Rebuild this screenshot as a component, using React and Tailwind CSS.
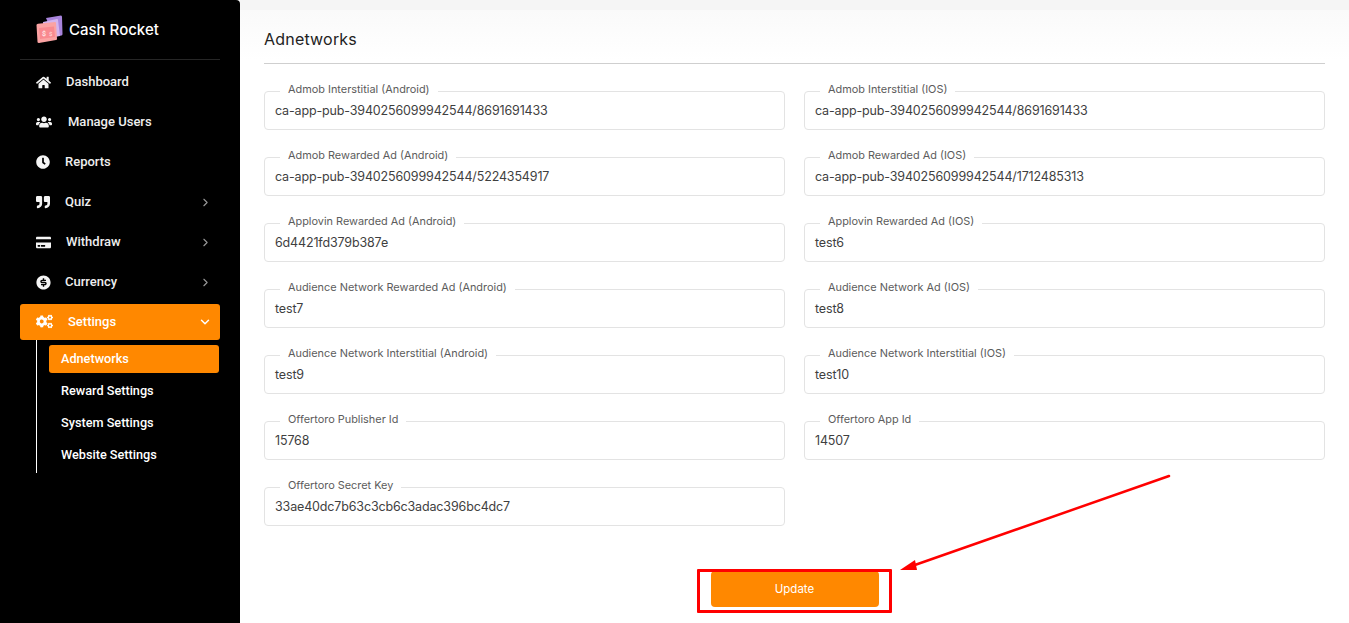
import React from "react";
import { FaHome, FaUsers, FaClock, FaQuoteRight, FaCreditCard, FaCogs } from "react-icons/fa";
import { RiMoneyDollarCircleFill } from "react-icons/ri";
import { ChevronRight, ChevronDown } from "lucide-react";

const menu = [
  { label: "Dashboard", Icon: FaHome, size: 15, gap: "ml-[12px]" },
  { label: "Manage Users", Icon: FaUsers, size: 16, gap: "ml-[14px]" },
  { label: "Reports", Icon: FaClock, size: 14, gap: "ml-[11px]" },
  { label: "Quiz", Icon: FaQuoteRight, size: 14, gap: "ml-[11px]", arrow: true },
  { label: "Withdraw", Icon: FaCreditCard, size: 15, gap: "ml-[12px]", arrow: true },
  { label: "Currency", Icon: RiMoneyDollarCircleFill, size: 17, gap: "ml-[11px]", arrow: true, shift: "-ml-[1px]" },
];

const fields = [
  ["Admob Interstitial (Android)", "ca-app-pub-3940256099942544/8691691433"],
  ["Admob Interstitial (IOS)", "ca-app-pub-3940256099942544/8691691433"],
  ["Admob Rewarded Ad (Android)", "ca-app-pub-3940256099942544/5224354917"],
  ["Admob Rewarded Ad (IOS)", "ca-app-pub-3940256099942544/1712485313"],
  ["Applovin Rewarded Ad (Android)", "6d4421fd379b387e"],
  ["Applovin Rewarded Ad (IOS)", "test6"],
  ["Audience Network Rewarded Ad (Android)", "test7"],
  ["Audience Network Ad (IOS)", "test8"],
  ["Audience Network Interstitial (Android)", "test9"],
  ["Audience Network Interstitial (IOS)", "test10"],
  ["Offertoro Publisher Id", "15768"],
  ["Offertoro App Id", "14507"],
  ["Offertoro Secret Key", "33ae40dc7b63c3cb6c3adac396bc4dc7"],
];

function Logo() {
  return (
    <svg width="27" height="29" viewBox="0 0 27 29" className="shrink-0">
      <path d="M10 3 L25 0.5 Q26 0.5 26 2 L26.5 19 Q26.5 20 25.5 20.5 L18 22 Z" fill="#a884dc" />
      <path d="M7 7 L21 4 Q22 4 22 5 L24 21 L8 23 Z" fill="#d3b4ee" />
      <path d="M0.5 10 Q0.5 9 2 8.8 L19 7 Q20 7 20 8 L21 24 Q21 25 20 25 L3 28 Q1.5 28 1.5 27 Z" fill="#fba3a3" />
      <path d="M3 13 L18 11.5 L19 22 L4 24 Z" fill="#f98a90" />
      <text x="6" y="21" fontSize="7" fontWeight="700" fill="#ffe6e6" fontFamily="Roboto, sans-serif">$</text>
      <text x="13" y="20.5" fontSize="6" fontWeight="700" fill="#ffd0d0" fontFamily="Roboto, sans-serif">$</text>
    </svg>
  );
}

function Field({ label, value }) {
  return (
    <fieldset className="block min-w-0 h-[46px] rounded-[4px] border border-[#e3e3e3] pl-[10px] m-0">
      <legend className="ml-[5px] px-[8px] text-[10.9px] leading-[14px] text-[#5c5c5c] -translate-y-[2px]">{label}</legend>
      <div className="text-[12.5px] leading-[20px] mt-[3px] text-[#3f3f3f] tracking-[-0.15px]">{value}</div>
    </fieldset>
  );
}

export default function App() {
  return (
    <div className="relative flex h-[623px] w-full overflow-hidden bg-white font-['Inter',sans-serif]">
      <aside className="w-[240px] shrink-0 bg-black px-[20px] rounded-tr-[4px] font-['Roboto',sans-serif]">
        <div className="flex h-[60px] items-center gap-[6px] border-b border-[#262626] pl-[16px]">
          <Logo />
          <span className="pt-[2px] text-[15px] font-medium text-white font-['Inter',sans-serif]">Cash Rocket</span>
        </div>
        <nav className="mt-[1px]">
          {menu.map(({ label, Icon, size, gap, arrow, shift }) => (
            <div key={label} className="flex h-[40px] pt-[2px] items-center text-[13px] font-medium text-[#eeeeee]">
              <span className="flex w-[18px] ml-[16px] justify-start"><Icon size={size} color="#f5f5f5" className={shift} /></span>
              <span className={gap}>{label}</span>
              {arrow && <ChevronRight size={13} strokeWidth={2} color="#999999" className="ml-auto mr-[8px]" />}
            </div>
          ))}
          <div className="flex h-[36px] mt-[3px] pb-[1px] items-center rounded-[3px] bg-[#ff8800] text-[13px] font-medium text-white">
            <span className="flex w-[18px] ml-[16px]"><FaCogs size={17} color="#fff" /></span>
            <span className="ml-[14px]">Settings</span>
            <ChevronDown size={14} strokeWidth={2.5} color="#fff" className="ml-auto mr-[8px]" />
          </div>
          <div className="ml-[16px] border-l border-white pl-[12px] pt-[5px] pb-[2px] w-[183px] h-[133px]">
            {["Adnetworks", "Reward Settings", "System Settings", "Website Settings"].map((s, i) => (
              <div key={s} className={`flex h-[28px] mb-[4px] items-center rounded-[3px] pl-[12px] text-[12.7px] font-medium text-white ${i === 0 ? "bg-[#ff8800]" : ""}`}>{s}</div>
            ))}
          </div>
        </nav>
      </aside>
      <main className="flex-1 min-w-0">
        <div className="h-[10px] bg-[#f5f5f5]" />
        <div className="px-[24px] bg-gradient-to-b from-[#fafafa] to-white to-[50px]">
          <h1 className="flex h-[54px] items-center border-b border-[#cfcfcf] pt-[5px] text-[16px] font-normal tracking-[0.2px] text-[#222]">Adnetworks</h1>
          <div className="mt-[20px] grid grid-cols-2 gap-x-[19px] gap-y-[20px]">
            {fields.map(([l, v]) => <Field key={l} label={l} value={v} />)}
          </div>
          <div className="mt-[45px] flex justify-center">
            <button className="h-[36px] w-[168px] pt-[2px] rounded-[4px] bg-[#ff8800] text-[11.5px] font-normal text-white">Update</button>
          </div>
        </div>
      </main>
      <div className="absolute left-[697px] top-[569px] h-[44px] w-[195px] border-[3px] border-[#ff0000] rounded-[1px]" />
      <svg className="absolute left-0 top-0 pointer-events-none" width="1349" height="623">
        <line x1="1169" y1="476" x2="912" y2="566" stroke="#ff0000" strokeWidth="2.5" strokeLinecap="round" />
        <path d="M900 570 L915 560 L917 570 Z" fill="#ff0000" />
      </svg>
    </div>
  );
}
